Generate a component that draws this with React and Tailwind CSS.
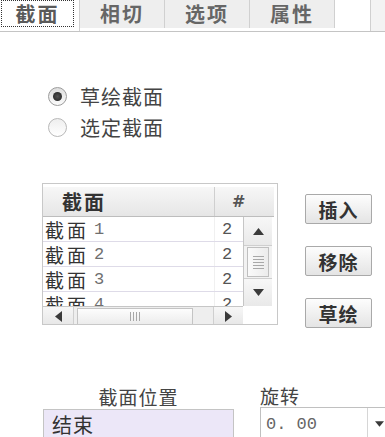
import React from "react";

function TriUp() {
  return (
    <svg width="11" height="7" viewBox="0 0 11 7"><polygon points="5.5,0 11,7 0,7" fill="#3a3a3a" /></svg>
  );
}
function TriDown({ w = 11, h = 7 }) {
  return (
    <svg width={w} height={h} viewBox="0 0 11 7"><polygon points="0,0 11,0 5.5,7" fill="#3a3a3a" /></svg>
  );
}
function TriLeft() {
  return (
    <svg width="7" height="11" viewBox="0 0 7 11"><polygon points="7,0 7,11 0,5.5" fill="#3a3a3a" /></svg>
  );
}
function TriRight() {
  return (
    <svg width="7" height="11" viewBox="0 0 7 11"><polygon points="0,0 7,5.5 0,11" fill="#3a3a3a" /></svg>
  );
}

const rows = ["1", "2", "3", "4"];

export default function App() {
  return (
    <div className="w-[385px] h-[437px] overflow-hidden bg-white font-['Noto_Sans_CJK_SC','Noto_Sans',sans-serif] text-[#333]">
      {/* Tabs */}
      <div className="flex h-[32px] border-b border-[#c4c4c4]">
        <div className="w-[80px] shrink-0 bg-white border-r border-[#d0d0d0] pl-[1px]">
          <div className="w-[73px] h-[27px] border border-dotted border-[#333] flex items-center justify-center text-[20px] font-bold tracking-[2px] text-[#5a5a5a] leading-[22px]">
            截面
          </div>
        </div>
        <div className="w-[85px] shrink-0 bg-[#eeeeee] border-r border-[#d0d0d0] h-[28px] flex items-center justify-center text-[20px] font-bold tracking-[2px] text-[#666] leading-[22px]">
          相切
        </div>
        <div className="w-[85px] shrink-0 bg-[#eeeeee] border-r border-[#d0d0d0] h-[28px] flex items-center justify-center text-[20px] font-bold tracking-[2px] text-[#666] leading-[22px]">
          选项
        </div>
        <div className="w-[85px] shrink-0 bg-[#eeeeee] border-r border-[#d0d0d0] h-[28px] flex items-center justify-center text-[20px] font-bold tracking-[2px] text-[#666] leading-[22px]">
          属性
        </div>
        <div className="w-[36px] shrink-0 bg-white border-r border-[#d0d0d0]" />
        <div className="flex-1 bg-[#f3f3f3]" />
      </div>

      {/* Radios */}
      <div className="mt-[49px] ml-[48px] flex flex-col">
        <div className="h-[31px] flex items-center gap-[13px]">
          <span className="w-[19px] h-[19px] rounded-full border border-[#9c9c9c] bg-linear-to-b from-[#dedede] to-[#fbfbfb] flex items-center justify-center">
            <span className="w-[9px] h-[9px] rounded-full bg-radial from-[#555] to-[#1e1e1e]" />
          </span>
          <span className="text-[20px] leading-[22px] tracking-[1px] text-[#444]">草绘截面</span>
        </div>
        <div className="h-[31px] flex items-center gap-[13px]">
          <span className="w-[19px] h-[19px] rounded-full border border-[#b8b8b8] bg-linear-to-b from-[#eeeeee] to-white" />
          <span className="text-[20px] leading-[22px] tracking-[1px] text-[#444]">选定截面</span>
        </div>
      </div>

      {/* Table + buttons */}
      <div className="mt-[40px] flex">
        <div className="ml-[42px] w-[236px] h-[142px] shrink-0 border border-[#c8c8c8] pt-[3px] pr-[3px] flex flex-col overflow-hidden">
          {/* header */}
          <div className="h-[30px] shrink-0 flex border-b border-[#bdbdbd] bg-linear-to-b from-[#f7f7f7] to-[#e6e6e6]">
            <div className="w-[172px] border-r border-[#cfcfcf] pl-[19px] flex items-center text-[20px] font-bold tracking-[2px] text-[#333] leading-[22px]">
              截面
            </div>
            <div className="flex-1 flex items-center pl-[17px] text-[16px] font-bold text-[#555] font-['DejaVu_Serif',serif] leading-none">
              #
            </div>
          </div>
          {/* body */}
          <div className="h-[89px] shrink-0 flex overflow-hidden">
            <div className="w-[200px] flex flex-col">
              {rows.map((r) => (
                <div key={r} className="h-[25px] shrink-0 flex border-b border-[#dedbe8] bg-white">
                  <div className="w-[172px] pl-[2px] flex items-center border-r border-[#f0f0f0]">
                    <span className="text-[19px] leading-[21px] tracking-[3px] text-[#333]">截面</span>
                    <span className="ml-[5px] text-[17px] leading-none text-[#6f6f6f] font-['Liberation_Mono',monospace]">{r}</span>
                  </div>
                  <div className="flex-1 pl-[7px] flex items-center text-[17px] leading-none text-[#555] font-['Liberation_Mono',monospace]">
                    2
                  </div>
                </div>
              ))}
            </div>
            <div className="w-[29px] shrink-0 flex flex-col border-l border-[#c6c6c6] bg-[#f2f2f2]">
              <div className="h-[29px] border-b border-[#cfcfcf] bg-linear-to-b from-[#f7f7f7] to-[#e9e9e9] flex items-center justify-center">
                <TriUp />
              </div>
              <div className="h-[30px] mx-[3px] my-[1px] border border-[#bfbfbf] bg-linear-to-r from-[#fafafa] to-[#ececec] flex flex-col items-center justify-center gap-[2px]">
                {[0, 1, 2, 3, 4].map((i) => (
                  <span key={i} className="w-[11px] h-[1px] bg-[#a8a8a8]" />
                ))}
              </div>
              <div className="h-[28px] border-t border-[#cfcfcf] bg-linear-to-b from-[#f7f7f7] to-[#e9e9e9] flex items-center justify-center">
                <TriDown />
              </div>
            </div>
          </div>
          {/* horizontal scrollbar */}
          <div className="h-[20px] w-[200px] shrink-0 flex border-t border-[#c6c6c6] bg-[#eeeeee]">
            <div className="w-[31px] border-r border-[#cfcfcf] bg-linear-to-b from-[#f7f7f7] to-[#e6e6e6] flex items-center justify-center">
              <TriLeft />
            </div>
            <div className="flex-1 flex items-stretch py-[1px]">
              <div className="ml-[3px] w-[116px] border border-[#c4c4c4] bg-linear-to-b from-[#fdfdfd] to-[#ececec] flex items-center justify-center gap-[2px]">
                {[0, 1, 2, 3].map((i) => (
                  <span key={i} className="w-[1px] h-[9px] bg-[#a8a8a8]" />
                ))}
              </div>
            </div>
            <div className="w-[30px] border-l border-[#cfcfcf] bg-linear-to-b from-[#f7f7f7] to-[#e6e6e6] flex items-center justify-center">
              <TriRight />
            </div>
          </div>
        </div>

        <div className="ml-[27px] mt-[11px] flex flex-col gap-[22px]">
          {["插入", "移除", "草绘"].map((t) => (
            <div
              key={t}
              className="w-[67px] h-[30px] rounded-[2px] border border-[#a9a9a9] bg-linear-to-b from-[#fdfdfd] to-[#e4e4e4] flex items-center justify-center text-[19px] font-bold tracking-[1px] text-[#333] leading-[21px]"
            >
              {t}
            </div>
          ))}
        </div>
      </div>

      {/* Bottom fields */}
      <div className="mt-[58px] flex">
        <div className="ml-[43px] w-[191px] shrink-0 flex flex-col">
          <div className="h-[23px] text-center text-[19px] leading-[22px] tracking-[1px] text-[#444]">截面位置</div>
          <div className="h-[32px] border border-[#c4c4c4] bg-[#ece7f8] pl-[8px] text-[20px] leading-[30px] tracking-[1px] text-[#333]">
            结束
          </div>
        </div>
        <div className="ml-[26px] w-[140px] shrink-0 flex flex-col">
          <div className="h-[21px] text-[19px] leading-[19px] tracking-[1px] text-[#444]">
            <span className="border-b border-[#555]">旋转</span>
          </div>
          <div className="h-[34px] flex border border-[#c0c0c0] bg-white">
            <div className="w-[107px] border-r border-[#d6d6d6] pl-[5px] flex items-center text-[17px] leading-none text-[#666] font-['Liberation_Mono',monospace]">
              0. 00
            </div>
            <div className="pl-[7px] flex items-center">
              <TriDown w={9} h={6} />
            </div>
          </div>
        </div>
      </div>
    </div>
  );
}
